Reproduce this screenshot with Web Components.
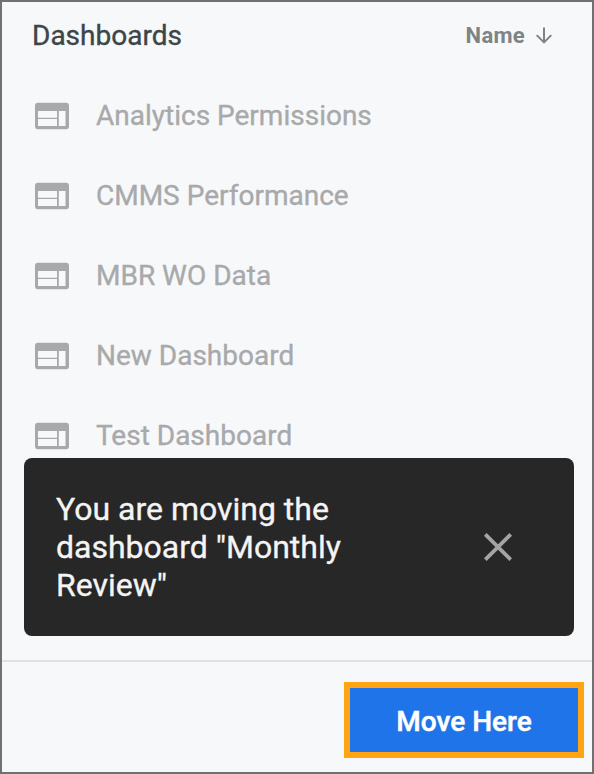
<!DOCTYPE html>
<html lang="en">
<head>
  <meta charset="UTF-8">
  <meta name="viewport" content="width=device-width, initial-scale=1.0">
  <title>Move Dashboard</title>
  <style>
    body {
      margin: 0;
      font-family: Roboto, "Liberation Sans", sans-serif;
      -webkit-text-stroke: 0.35px;
    }
  </style>
</head>
<body>

  <move-panel>
    <list-header slot="header">
      Dashboards
      <span slot="sort">Name</span>
    </list-header>
    <dashboard-item>Analytics Permissions</dashboard-item>
    <dashboard-item>CMMS Performance</dashboard-item>
    <dashboard-item>MBR WO Data</dashboard-item>
    <dashboard-item>New Dashboard</dashboard-item>
    <dashboard-item>Test Dashboard</dashboard-item>
    <toast-message slot="toast">You are moving the dashboard "Monthly Review"</toast-message>
    <move-button slot="footer">Move Here</move-button>
  </move-panel>

  <script type="module">
    class MovePanel extends HTMLElement {
      constructor() {
        super();
        this.attachShadow({ mode: 'open' });
        this.shadowRoot.innerHTML = `
          <style>
            :host {
              display: flex;
              flex-direction: column;
              box-sizing: border-box;
              height: 774px;
              border: 2px solid #717174;
              background-color: #f7f8fa;
            }
            .content {
              position: relative;
              flex: 1;
              min-height: 0;
            }
            /* the toast floats over the end of the list */
            .toast {
              position: absolute;
              left: 22px;
              right: 18px;
              bottom: 24px;
            }
            footer {
              display: flex;
              justify-content: flex-end;
              box-sizing: border-box;
              height: 112px;
              padding: 20px 8px 0;
              border-top: 2px solid #dfe1e2;
            }
          </style>
          <div class="content">
            <slot name="header"></slot>
            <slot></slot>
            <div class="toast"><slot name="toast"></slot></div>
          </div>
          <footer><slot name="footer"></slot></footer>
        `;
      }
    }
    customElements.define('move-panel', MovePanel);

    class ListHeader extends HTMLElement {
      constructor() {
        super();
        this.attachShadow({ mode: 'open' });
        this.shadowRoot.innerHTML = `
          <style>
            :host {
              display: flex;
              justify-content: space-between;
              align-items: center;
              height: 66px;
              margin-bottom: 8px;
              padding: 0 39px 0 30px;
              color: #3c4547;
              font-size: 28px;
            }
            .sort {
              display: flex;
              align-items: center;
              gap: 11px;
              color: #7e8486;
              font-size: 22px;
              font-weight: 700;
              letter-spacing: 0.3px;
              -webkit-text-stroke: 0;
            }
            svg {
              display: block;
            }
          </style>
          <div><slot></slot></div>
          <div class="sort">
            <slot name="sort"></slot>
            <svg width="17" height="17" viewBox="0 0 17 17" fill="none" stroke="#7e8486" stroke-width="2">
              <path d="M8 .5v15M.7 8.100l7.300 7.300 7.300-7.300"/>
            </svg>
          </div>
        `;
      }
    }
    customElements.define('list-header', ListHeader);

    class DashboardItem extends HTMLElement {
      constructor() {
        super();
        this.attachShadow({ mode: 'open' });
        this.shadowRoot.innerHTML = `
          <style>
            :host {
              display: flex;
              align-items: center;
              gap: 27px;
              height: 80px;
              padding-left: 33px;
              color: #a8a9aa;
              font-size: 28px;
            }
            svg {
              display: block;
            }
            div {
              margin-top: -2px;
            }
          </style>
          <svg width="34" height="28" viewBox="0 0 34 28">
            <path fill="#a8a9aa" fill-rule="evenodd" d="M3 .7h28a3 3 0 0 1 3 3v20.600a3 3 0 0 1-3 3H3a3 3 0 0 1-3-3V3.700a3 3 0 0 1 3-3zM3 9v6.700h19V9zM3 17v7h19v-7zM23.800 9v15H30.500V9z"/>
          </svg>
          <div><slot></slot></div>
        `;
      }
    }
    customElements.define('dashboard-item', DashboardItem);

    class ToastMessage extends HTMLElement {
      constructor() {
        super();
        this.attachShadow({ mode: 'open' });
        this.shadowRoot.innerHTML = `
          <style>
            :host {
              display: flex;
              justify-content: space-between;
              align-items: center;
              box-sizing: border-box;
              height: 178px;
              padding: 0 61px 0 32px;
              border-radius: 8px;
              background-color: #272727;
              color: #f4f4f4;
              font-size: 32px;
              line-height: 38px;
            }
            .text {
              width: 310px;
            }
            svg {
              display: block;
            }
          </style>
          <div class="text"><slot></slot></div>
          <svg width="30" height="30" viewBox="0 0 30 30" stroke="#a2a4a6" stroke-width="3.800">
            <path d="M2.300 2.300l25.400 25.400M27.700 2.300L2.300 27.700"/>
          </svg>
        `;
      }
    }
    customElements.define('toast-message', ToastMessage);

    class MoveButton extends HTMLElement {
      constructor() {
        super();
        this.attachShadow({ mode: 'open' });
        this.shadowRoot.innerHTML = `
          <style>
            :host {
              display: block;
            }
            button {
              display: block;
              width: 240px;
              height: 76px;
              padding: 2px 0 0;
              border: 6px solid #ffa412;
              background-color: #1e74e8;
              color: #fff;
              font-family: inherit;
              font-size: 28px;
              font-weight: 500;
              -webkit-text-stroke: 0.5px;
            }
          </style>
          <button><slot></slot></button>
        `;
      }
    }
    customElements.define('move-button', MoveButton);
  </script>

</body>
</html>
